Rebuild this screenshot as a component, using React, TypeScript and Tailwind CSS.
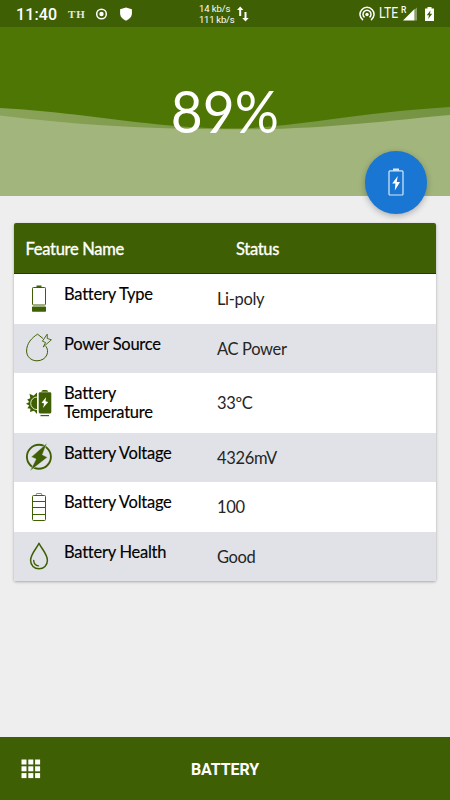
import type { ReactNode } from "react";

const GREEN = "#3f5f04";

function BatteryTypeIcon() {
  return (
    <svg width="28" height="30" viewBox="0 0 28 30" fill="none">
      <path d="M11.5 1.5h5v1.8h-5z" fill={GREEN} />
      <rect x="7.5" y="3.5" width="13" height="17.5" rx="0.8" stroke={GREEN} />
      <rect x="7" y="22.5" width="14" height="5.2" rx="0.6" fill={GREEN} />
    </svg>
  );
}

function PowerSourceIcon() {
  return (
    <svg width="28" height="30" viewBox="0 0 28 30" fill="none" stroke={GREEN} strokeWidth="1">
      <path d="M20.8 13.2C22.8 15.8 23.1 19 21.8 22C20.3 25.5 16.6 27.8 12 27.8C6 27.8 1.6 23.6 1.6 18C1.6 10.5 6.6 4.8 12.6 1.2L18 5.5" />
      <path d="M22.2 1.2L17.4 8.2L20.6 9.5L18.2 14L26.4 6.8L22.3 5.5Z" strokeWidth="0.9" />
    </svg>
  );
}

function TemperatureIcon() {
  return (
    <svg width="28" height="30" viewBox="0 0 28 30">
      <g fill={GREEN}>
        <path d="M12 4.5L8.6 7.8L4.5 5.8L5.3 10.2L2.2 11.6L4.2 14L1 15.8L4.2 17.6L2.4 20.2L5.5 20.7L5 24L9 22.7L12 26Z" />
        <path d="M12 9A6.3 6.3 0 0 0 12 21.6" fill="none" stroke="#fff" strokeWidth="0.8" />
        <path d="M12.6 4.5h1v21h-1z" fill="#fff" />
        <path d="M16.3 3.7Q16.5 2 18.5 2h2.5q2 0 2.2 1.7z" />
        <rect x="13.7" y="4.2" width="12.6" height="21.2" rx="1.3" />
        <path d="M15.5 27h8.5v1.2h-8.5z" />
      </g>
      <path d="M21 9.3L16.6 14.7L19.2 15.5L17.9 20L23.2 14L20.5 13.2Z" fill="#fff" />
    </svg>
  );
}

function VoltageIcon() {
  return (
    <svg width="28" height="30" viewBox="0 0 28 30" fill="none">
      <circle cx="13.9" cy="14.8" r="12" stroke={GREEN} strokeWidth="1.9" />
      <path d="M22 1L6.2 15L11 17L5 29L22.5 15.3L17.4 12.7Z" fill={GREEN} stroke="#e1e2e7" strokeWidth="0.5" />
    </svg>
  );
}

function LevelIcon() {
  return (
    <svg width="28" height="30" viewBox="0 0 28 30" fill="none" stroke={GREEN}>
      <path d="M11.3 3V2.2q0-.7.7-.7h4q.7 0 .7.7V3" strokeOpacity=".65" />
      <rect x="7.5" y="3.5" width="13" height="25" rx="1" />
      <path d="M7.5 9.5h13M7.5 15.5h13M7.5 22.5h13" />
    </svg>
  );
}

function HealthIcon() {
  return (
    <svg width="28" height="30" viewBox="0 0 28 30" fill="none" stroke={GREEN} strokeWidth="1.5" strokeLinecap="round">
      <path d="M14 2.2C12 6.8 5.6 13.2 5.6 19.2C5.6 24.4 9.2 27.8 14 27.8C18.8 27.8 22.4 24.4 22.4 19.2C22.4 13.2 16 6.8 14 2.2Z" strokeLinejoin="round" />
      <path d="M8.7 19.5C8.9 22.4 10.8 24.6 13.5 24.9" strokeWidth="1.4" />
    </svg>
  );
}

type Row = { icon: ReactNode; label: string; value: string };

const rows: Row[] = [
  { icon: <BatteryTypeIcon />, label: "Battery Type", value: "Li-poly" },
  { icon: <PowerSourceIcon />, label: "Power Source", value: "AC Power" },
  { icon: <TemperatureIcon />, label: "Battery Temperature", value: "33ºC" },
  { icon: <VoltageIcon />, label: "Battery Voltage", value: "4326mV" },
  { icon: <LevelIcon />, label: "Battery Voltage", value: "100" },
  { icon: <HealthIcon />, label: "Battery Health", value: "Good" },
];

function StatusBar() {
  return (
    <header className="flex h-[27px] items-center bg-[#3f5f04] pl-4 font-[Roboto,sans-serif] text-white">
      <span className="w-[52px] pt-[2px] text-[16px] leading-none font-medium tracking-[0.1px]">11:40</span>
      <span className="w-[28px] pt-px font-['Liberation_Serif',serif] text-[11px] leading-none font-bold tracking-[0.9px] text-[#e5eadc]">TH</span>
      <svg width="12" height="12" viewBox="0 0 12 12" fill="none" stroke="white">
        <circle cx="5.5" cy="6" r="4.8" strokeWidth="1.5" />
        <circle cx="5.5" cy="6" r="2.2" fill="white" stroke="none" />
      </svg>
      <svg className="ml-[12px]" width="12" height="14" viewBox="0 0 12 14">
        <path d="M6 .4L11.9 2.3V7C11.7 10.2 9 12.4 6 13.8C3 12.4.3 10.2.1 7V2.3Z" fill="white" />
      </svg>
      <div className="ml-[67px] w-[38px] text-[9.5px] leading-[11px] whitespace-nowrap">
        <p className="tracking-[-0.1px]">14 kb/s</p>
        <p className="tracking-[-0.25px]">111 kb/s</p>
      </div>
      <svg width="12" height="18" viewBox="0 0 12 18" fill="none" stroke="white" strokeWidth="2">
        <path d="M3.2 11V3M8.5 7v8" />
        <path d="M0 5L3.2 1.4L6.4 5ZM5.3 13L8.5 16.6L11.7 13Z" fill="white" stroke="none" />
      </svg>
      <svg className="ml-[110px]" width="16" height="16" viewBox="0 0 16 16" fill="none" stroke="white" strokeWidth="1.5">
        <path d="M4 14.1A7 7 0 1 1 12 14.1" />
        <path d="M5.5 11.4A4 4 0 1 1 10.5 11.4" />
        <circle cx="8" cy="8.5" r="1.7" fill="white" stroke="none" />
      </svg>
      <span className="ml-[4px] w-[24px] origin-left scale-x-[0.84] pt-[2px] text-[14.5px] leading-none">LTE</span>
      <svg className="overflow-visible" width="14" height="16" viewBox="0 0 14 16">
        <path d="M11.6 3.4V14.5H14V1.5Z" fill="#8c9e66" />
        <path d="M0 14.5L11.5 3V14.5Z" fill="white" />
        <text x="-2" y="7" fill="white" fontFamily="Roboto, sans-serif" fontSize="8.5" className="font-medium">R</text>
      </svg>
      <svg className="ml-2" width="9" height="14" viewBox="0 0 9 14">
        <path d="M2.5 0h4v1.6H9V14H0V1.6h2.5z" fill="white" />
        <path d="M5.6 3.2L1.8 8.2H4L3.2 12L7.2 6.8H4.9Z" fill={GREEN} />
      </svg>
    </header>
  );
}

function Hero() {
  return (
    <section className="relative flex h-[169px] justify-center bg-[#4e7604]">
      <svg className="absolute inset-0" width="450" height="169" viewBox="0 0 450 169">
        <defs>
          <linearGradient id="crest" x1="0" x2="1">
            <stop offset="0" stopColor="#8aa35a" />
            <stop offset=".42" stopColor="#7d9948" />
            <stop offset="1" stopColor="#759443" />
          </linearGradient>
        </defs>
        <path d="M0 81C65 84.5 110 93 170 98.5C195 101 222 101.5 240 101.5C305 99 350 86.5 450 80V110H0Z" fill="url(#crest)" />
        <path d="M0 88.5C75 98 145 102 225 102.2C318 103.5 382 94 450 88V169H0Z" fill="#a2b57c" />
      </svg>
      <h1 className="relative mt-[49px] scale-x-[0.95] font-[Lato,sans-serif] text-[58px] leading-[70px] font-normal text-white">89%</h1>
      <button aria-label="Battery status" className="absolute top-[124px] right-[22.7px] flex size-[62.6px] items-center justify-center rounded-full bg-[#1976d2] shadow-[0_2px_6px_rgba(0,0,0,0.28)]">
        <svg width="16" height="28" viewBox="0 0 16 28">
          <path d="M5 .5h6v2.2H5z" fill="#d8e9fa" />
          <rect x="1" y="2.8" width="14" height="24.2" rx="1" fill="none" stroke="#d8e9fa" strokeWidth="1.2" />
          <path d="M9.8 8L4.2 15.6H7.4L6.8 22.4L12 14H8.7Z" fill="white" />
        </svg>
      </button>
    </section>
  );
}

export default function App() {
  return (
    <div className="flex h-[800px] w-[450px] flex-col overflow-hidden bg-[#eeeeee] font-[Lato,sans-serif]">
      <StatusBar />
      <Hero />
      <main className="flex-1 px-[14px] pt-[27px]">
        <div className="overflow-hidden rounded-[2px] bg-white shadow-[0_1px_3px_rgba(0,0,0,0.3)]">
          <div className="flex h-[51px] items-center border-b border-[#213b00] bg-[#3f5f04] pt-[2px] text-[16.5px] tracking-[-0.3px] text-white [-webkit-text-stroke:0.35px_white]">
            <span className="w-[222px] pl-[11.5px]">Feature Name</span>
            <span>Status</span>
          </div>
          {rows.map((row, index) => (
            <div key={index} className={`flex items-center ${index === 2 ? "h-[59.5px]" : "h-[49.5px]"} ${index % 2 ? "bg-[#e1e2e7]" : "bg-white"}`}>
              <div className="ml-[11px] w-[39px]">{row.icon}</div>
              <div className="h-full w-[153px] pt-[11.3px] text-[16.5px] leading-[19px] tracking-[-0.25px] text-black [-webkit-text-stroke:0.15px_black]">
                <p className="w-[120px]">{row.label}</p>
              </div>
              <span className="pt-[2px] text-[16.5px] tracking-[-0.35px] text-[#252525]">{row.value}</span>
            </div>
          ))}
        </div>
      </main>
      <footer className="flex h-[63px] items-center bg-[#3f5f04] text-white">
        <svg className="ml-[21px]" width="20" height="20" viewBox="0 0 20 20" fill="white">
          {[0.5, 7.3, 14.1].map((y) =>
            [0.5, 7.3, 14.1].map((x) => <rect key={`${x}-${y}`} x={x} y={y} width="5" height="5" />),
          )}
        </svg>
        <span className="ml-[150px] pt-[2px] font-[Roboto,sans-serif] text-[16px] leading-none font-bold tracking-[-0.1px]">BATTERY</span>
      </footer>
    </div>
  );
}
